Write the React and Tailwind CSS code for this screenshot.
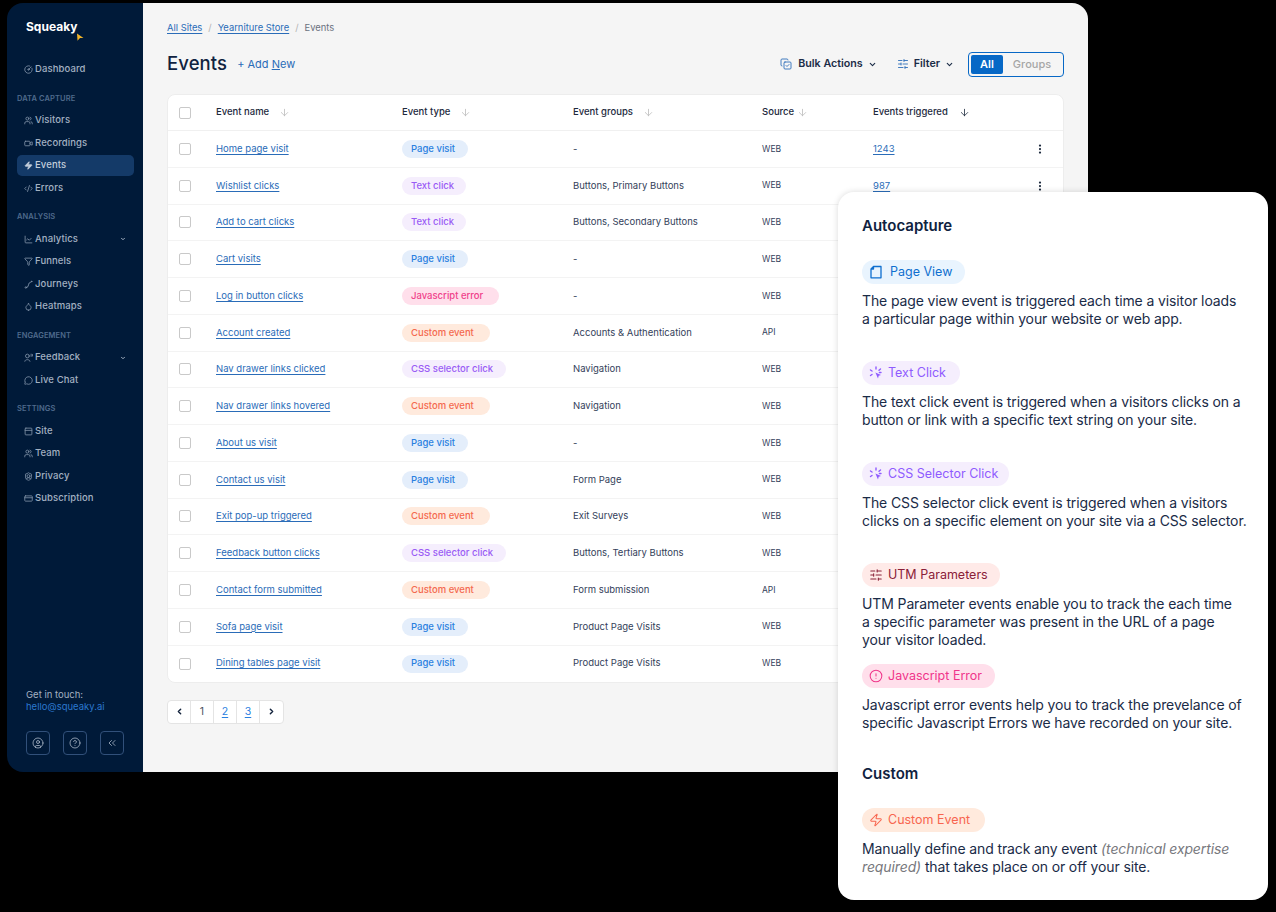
import React from 'react';
import {
  ArrowDown, ChevronDown, ChevronLeft, ChevronRight, ChevronsLeft, ChartLine, CircleAlert, CircleGauge, CircleHelp, CircleUser,
  CodeXml, CopyCheck, CreditCard, Droplet, EllipsisVertical, Filter, MessageCircle, PanelTop,
  ShieldUser, SlidersHorizontal, Users, Video, Zap,
} from 'lucide-react';

const font = { fontFamily: 'Inter, "Liberation Sans", sans-serif' };

function JourneysIcon({ size, className }) {
  return (
    <svg className={className} width={size} height={size} viewBox="0 0 24 24" fill="none" stroke="currentColor" strokeWidth="2.4" strokeLinecap="round">
      <circle cx="5" cy="20" r="2" />
      <path d="M7 20 C15 20 9 6 17 6" />
      <circle cx="20" cy="4" r="1" fill="currentColor" />
    </svg>
  );
}

function FeedbackIcon({ size, className }) {
  return (
    <svg className={className} width={size} height={size} viewBox="0 0 24 24" fill="none" stroke="currentColor" strokeWidth="2.2" strokeLinecap="round">
      <circle cx="9" cy="8" r="5" />
      <path d="M2 22 C2 16 16 16 16 22" />
      <path d="M19 3 V9 M22.5 4 V8" />
    </svg>
  );
}

const navGroups = [
  { items: [{ label: 'Dashboard', icon: CircleGauge }] },
  {
    title: 'DATA CAPTURE',
    items: [
      { label: 'Visitors', icon: Users },
      { label: 'Recordings', icon: Video },
      { label: 'Events', icon: Zap, active: true },
      { label: 'Errors', icon: CodeXml },
    ],
  },
  {
    title: 'ANALYSIS',
    items: [
      { label: 'Analytics', icon: ChartLine, caret: true },
      { label: 'Funnels', icon: Filter },
      { label: 'Journeys', icon: JourneysIcon },
      { label: 'Heatmaps', icon: Droplet },
    ],
  },
  {
    title: 'ENGAGEMENT',
    items: [
      { label: 'Feedback', icon: FeedbackIcon, caret: true },
      { label: 'Live Chat', icon: MessageCircle },
    ],
  },
  {
    title: 'SETTINGS',
    items: [
      { label: 'Site', icon: PanelTop },
      { label: 'Team', icon: Users },
      { label: 'Privacy', icon: ShieldUser },
      { label: 'Subscription', icon: CreditCard },
    ],
  },
];

const typeStyles = {
  'Page visit': 'bg-[#e4eefb] text-[#2a80e0] w-[66px]',
  'Text click': 'bg-[#f5eefd] text-[#9a5cf5] w-[64px]',
  'Javascript error': 'bg-[#ffdfeb] text-[#f0418a] w-[97px]',
  'Custom event': 'bg-[#ffeadd] text-[#f4694f] w-[88px]',
  'CSS selector click': 'bg-[#f5eefd] text-[#9a5cf5] w-[104px]',
};

// the last column is only visible on the first two rows, the card covers the rest
const rows = [
  ['Home page visit', 'Page visit', '-', 'WEB', '1243'],
  ['Wishlist clicks', 'Text click', 'Buttons, Primary Buttons', 'WEB', '987'],
  ['Add to cart clicks', 'Text click', 'Buttons, Secondary Buttons', 'WEB'],
  ['Cart visits', 'Page visit', '-', 'WEB'],
  ['Log in button clicks', 'Javascript error', '-', 'WEB'],
  ['Account created', 'Custom event', 'Accounts & Authentication', 'API'],
  ['Nav drawer links clicked', 'CSS selector click', 'Navigation', 'WEB'],
  ['Nav drawer links hovered', 'Custom event', 'Navigation', 'WEB'],
  ['About us visit', 'Page visit', '-', 'WEB'],
  ['Contact us visit', 'Page visit', 'Form Page', 'WEB'],
  ['Exit pop-up triggered', 'Custom event', 'Exit Surveys', 'WEB'],
  ['Feedback button clicks', 'CSS selector click', 'Buttons, Tertiary Buttons', 'WEB'],
  ['Contact form submitted', 'Custom event', 'Form submission', 'API'],
  ['Sofa page visit', 'Page visit', 'Product Page Visits', 'WEB'],
  ['Dining tables page visit', 'Page visit', 'Product Page Visits', 'WEB'],
];

function Logo() {
  return (
    <div className="flex items-start pl-[19px] h-[40px]">
      <span className="text-[12px] font-bold text-white leading-[16px]">Squeaky</span>
      <svg className="mt-[14px] -ml-[1px]" width="8" height="8" viewBox="0 0 8 8">
        <path d="M1 0.5 L7.5 5 L4 5 L1.5 7.8 Z" fill="#f0b429" />
      </svg>
    </div>
  );
}

function NavItem({ item }) {
  const Icon = item.icon;
  return (
    <div className={`flex items-center h-[21px] mb-[1.5px] ml-[10px] mr-[9px] pl-[7px] pr-[8px] rounded-[5px] ${item.active ? 'bg-[#143a68] text-[#c3cedb]' : 'text-[#a3b1c2]'}`}>
      <Icon size={9} strokeWidth={2.2} className={`mr-[2px] ${item.active ? 'fill-[#c3cedb] text-[#c3cedb]' : 'text-[#7f92a8]'}`} />
      <span className="text-[9.5px] font-medium tracking-[0.1px]">{item.label}</span>
      {item.caret && <ChevronDown size={6} strokeWidth={4} className="ml-auto" />}
    </div>
  );
}

function Sidebar() {
  return (
    <aside className="w-[136px] shrink-0 bg-[#001a39] flex flex-col pt-[16px]">
      <Logo />
      {navGroups.map((group, i) => (
        <div key={i} className={i === 0 ? '' : 'mt-[8.5px]'}>
          {group.title && (
            <div className="pl-[10px] text-[7.5px] font-semibold text-[#4f6a8c] h-[17px] mb-[3px] flex items-center tracking-[0.1px]">
              {group.title}
            </div>
          )}
          {group.items.map((item) => <NavItem key={item.label} item={item} />)}
        </div>
      ))}
      <div className="mt-auto pl-[19px] pb-[17px]">
        <div className="text-[9.5px] leading-[12px] text-[#a3b1c2]">Get in touch:</div>
        <div className="text-[9.5px] leading-[12px] text-[#2b78cf]">hello@squeaky.ai</div>
        <div className="flex gap-[13px] mt-[18px]">
          {[CircleUser, CircleHelp, ChevronsLeft].map((Icon, i) => (
            <div key={i} className="w-[24px] h-[24px] rounded-[4px] border border-[#31507a] flex items-center justify-center text-[#b7c3d2]">
              <Icon size={12} strokeWidth={1.5} />
            </div>
          ))}
        </div>
      </div>
    </aside>
  );
}

function HeaderCell({ label, gap, dark }) {
  return (
    <div className="flex items-center text-[9.5px] font-medium text-[#1d2a3d]">
      <span>{label}</span>
      <ArrowDown size={11} strokeWidth={1.75} className={dark ? 'text-[#1d2a3d]' : 'text-[#bcbcbc]'} style={{ marginLeft: gap }} />
    </div>
  );
}

function Checkbox() {
  return <div className="w-[12px] h-[12px] rounded-[2px] border border-[#c9c9c9] bg-white ml-[11px]" />;
}

function EventsTable() {
  const grid = 'grid grid-cols-[48px_186px_171px_189px_111px_1fr] items-center';
  return (
    <div className="mt-[17px] w-[897px] bg-white rounded-[8px] border border-[#ededed] overflow-hidden">
      <div className={`${grid} h-[36px] border-b border-[#f0f0f0]`}>
        <Checkbox />
        <HeaderCell label="Event name" gap={10} />
        <HeaderCell label="Event type" gap={10} />
        <HeaderCell label="Event groups" gap={10} />
        <HeaderCell label="Source" gap={3} />
        <HeaderCell label="Events triggered" gap={11} dark />
      </div>
      {rows.map(([name, type, groups, source, count], i) => (
        <div key={name} className={`${grid} ${i < rows.length - 1 ? 'h-[36.75px] border-b border-[#f3f3f3]' : 'h-[36px]'}`}>
          <Checkbox />
          <span className="text-[9.5px] text-[#2a6cb8] underline underline-offset-2">{name}</span>
          <span className={`${typeStyles[type]} h-[18px] rounded-full flex items-center pl-[9px] text-[9.5px] font-medium`}>{type}</span>
          <span className="text-[9.5px] text-[#33415a]">{groups}</span>
          <span className="text-[8.5px] text-[#33415a]">{source}</span>
          {count && (
            <div className="flex items-center justify-between pr-[17px]">
              <span className="text-[9.5px] text-[#2a6cb8] underline underline-offset-2">{count}</span>
              <EllipsisVertical size={12} strokeWidth={2.5} className="text-[#1d2a3d]" />
            </div>
          )}
        </div>
      ))}
    </div>
  );
}

function Pagination() {
  const cell = 'w-[23.5px] h-full flex items-center justify-center border-r border-[#e4e4e4] last:border-r-0 text-[10.5px]';
  return (
    <div className="mt-[17px] flex w-[117px] h-[24px] bg-white rounded-[4px] border border-[#e4e4e4]">
      <div className={cell}><ChevronLeft size={9} strokeWidth={4} className="text-[#14243d]" /></div>
      <div className={`${cell} text-[#4b5563]`}>1</div>
      <div className={`${cell} text-[#2a80e0] underline underline-offset-2`}>2</div>
      <div className={`${cell} text-[#2a80e0] underline underline-offset-2`}>3</div>
      <div className={cell}><ChevronRight size={9} strokeWidth={4} className="text-[#14243d]" /></div>
    </div>
  );
}

function Toolbar() {
  return (
    <div className="flex items-center mt-[17px] h-[26px]">
      <h1 className="text-[18.5px] font-medium text-[#0f2240] tracking-[0.1px]">Events</h1>
      <span className="ml-[10px] text-[11px] text-[#2a6cb8]">+ Add <span className="underline">N</span>ew</span>
      <div className="ml-auto flex items-center">
        <CopyCheck size={12} strokeWidth={1.75} className="text-[#2a6cb8] mr-[6px]" />
        <span className="text-[10.7px] font-semibold text-[#1b2c47]">Bulk Actions</span>
        <ChevronDown size={9} strokeWidth={3} className="ml-[5px] text-[#1b2c47]" />
        <SlidersHorizontal size={12} strokeWidth={1.75} className="text-[#2a6cb8] ml-[20px] mr-[5px]" />
        <span className="text-[10.7px] font-semibold text-[#1b2c47]">Filter</span>
        <ChevronDown size={9} strokeWidth={3} className="ml-[5px] text-[#1b2c47]" />
        <div className="ml-[14px] w-[96px] h-[25px] border-[1.5px] border-[#0768c6] rounded-[4px] flex items-center p-[2px]">
          <div className="w-[32px] h-full rounded-[2px] bg-[#0768c6] text-white text-[11px] font-semibold flex items-center justify-center">All</div>
          <div className="flex-1 text-center text-[11px] font-medium text-[#a6a6a6]">Groups</div>
        </div>
      </div>
    </div>
  );
}

function PageIcon({ className }) {
  return (
    <svg className={className} width="14" height="14" viewBox="0 0 14 14" fill="none" stroke="currentColor" strokeWidth="1.3">
      <path d="M4.5 1.5 H12 V12.8 H2 V4 Z M4.5 1.5 V4 H2" strokeLinejoin="round" />
    </svg>
  );
}

function ClickIcon({ className }) {
  return (
    <svg className={className} width="14" height="14" viewBox="0 0 14 14" fill="none" stroke="currentColor" strokeWidth="1.4" strokeLinecap="round">
      <path d="M7 1 V3 M1.5 4 L3 5 M1.5 9.5 L3 8.5 M11.5 3 L10 4.3 M12 6.5 H10.4" />
      <path d="M6.4 6.4 L12 9 L9.7 9.8 L9 12.5 Z" fill="currentColor" stroke="none" />
    </svg>
  );
}

function Pill({ icon, label, className, width }) {
  return (
    <div className={`h-[24px] rounded-full flex items-center pl-[7px] gap-[5px] text-[12.5px] ${className}`} style={{ width }}>
      {icon}
      <span>{label}</span>
    </div>
  );
}

function InfoCard() {
  const body = 'text-[14px] leading-[18px] text-[#1a2b47] mt-[8px] tracking-[-0.12px]';
  return (
    <div className="absolute left-[838px] top-[192px] w-[430px] h-[708px] bg-white rounded-[16px] pl-[24px] pr-[20px] pt-[25px] shadow-[0_0_6px_rgba(0,0,0,0.15)]">
      <h2 className="text-[15px] font-semibold text-[#0f2240] leading-[18px]">Autocapture</h2>

      <div className="mt-[25px]">
        <Pill width={103} label="Page View" className="bg-[#e9f4fe] text-[#0f6fcf] gap-[7px]" icon={<PageIcon className="text-[#0f6fcf]" />} />
        <p className={body}>The page view event is triggered each time a visitor loads<br />a particular page within your website or web app.</p>
      </div>
      <div className="mt-[33px]">
        <Pill width={98} label="Text Click" className="bg-[#f5eefd] text-[#8f5bff]" icon={<ClickIcon />} />
        <p className={body}>The text click event is triggered when a visitors clicks on a<br />button or link with a specific text string on your site.</p>
      </div>
      <div className="mt-[33px]">
        <Pill width={147} label="CSS Selector Click" className="bg-[#f5eefd] text-[#8f5bff]" icon={<ClickIcon />} />
        <p className={body}>The CSS selector click event is triggered when a visitors<br />clicks on a specific element on your site via a CSS selector.</p>
      </div>
      <div className="mt-[33px]">
        <Pill width={138} label="UTM Parameters" className="bg-[#ffeae8] text-[#8a2038]" icon={<SlidersHorizontal size={14} strokeWidth={1.75} />} />
        <p className={body}>UTM Parameter events enable you to track the each time<br />a specific parameter was present in the URL of a page<br />your visitor loaded.</p>
      </div>
      <div className="mt-[15px]">
        <Pill width={133} label="Javascript Error" className="bg-[#ffdfeb] text-[#f0358a]" icon={<CircleAlert size={14} strokeWidth={1.75} />} />
        <p className={body}>Javascript error events help you to track the prevelance of<br />specific Javascript Errors we have recorded on your site.</p>
      </div>

      <h2 className="mt-[33px] text-[15px] font-semibold text-[#0f2240] leading-[18px]">Custom</h2>
      <div className="mt-[25px]">
        <Pill width={123} label="Custom Event" className="bg-[#ffeadd] text-[#f8654f]" icon={<Zap size={14} strokeWidth={1.75} />} />
        <p className={body}>Manually define and track any event <em className="text-[#77787d]">(technical expertise<br />required)</em> that takes place on or off your site.</p>
      </div>
    </div>
  );
}

export default function App() {
  return (
    <div className="relative w-[1276px] h-[912px] bg-black overflow-hidden" style={font}>
      <div className="ml-[7px] pt-[3px]">
        <div className="w-[1081px] h-[769px] flex rounded-[16px] overflow-hidden">
          <Sidebar />
          <main className="flex-1 bg-[#f5f5f5] pl-[24px] pt-[19px]">
            <div className="flex items-center text-[9.4px] h-[12px]">
              <span className="text-[#2a6cb8] underline underline-offset-2">All Sites</span>
              <span className="mx-[6px] text-[#b3b3b3]">/</span>
              <span className="text-[#2a6cb8] underline underline-offset-2">Yearniture Store</span>
              <span className="mx-[6px] text-[#b3b3b3]">/</span>
              <span className="text-[#6b7280]">Events</span>
            </div>
            <div className="w-[897px]">
              <Toolbar />
            </div>
            <EventsTable />
            <Pagination />
          </main>
        </div>
      </div>
      <InfoCard />
    </div>
  );
}
